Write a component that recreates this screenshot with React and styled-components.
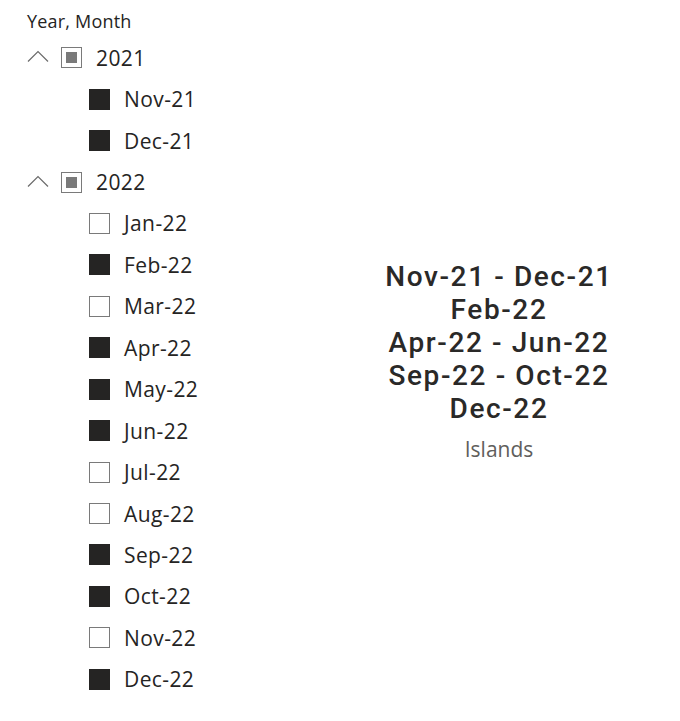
import React from "react";
import styled, { createGlobalStyle } from "styled-components";

const Global = createGlobalStyle`
  html, body { margin: 0; padding: 0; background: #fff; }
  body { font-family: "Open Sans", "Noto Sans", sans-serif; color: #252423; }
`;

const Page = styled.div`
  width: 680px;
  height: 721px;
  display: grid;
  grid-template-columns: 318px 1fr;
  overflow: hidden;
`;

const Slicer = styled.div`
  display: flex;
  flex-direction: column;
  padding: 9px 0 0 27px;
`;

const Header = styled.div`
  font-size: 18px;
  line-height: 24px;
  letter-spacing: 0.2px;
  color: #252423;
  margin-bottom: 4px;
`;

const Row = styled.div`
  height: 41.45px;
  display: flex;
  align-items: center;
  padding-left: ${(p) => (p.$child ? "62px" : "0")};
  font-size: 21px;
  letter-spacing: 0.4px;
  color: #252423;
`;

const Chevron = styled.svg`
  width: 22px;
  height: 12px;
  margin-right: 12px;
  margin-top: -3px;
  flex: none;
`;

const Box = styled.span`
  width: 21px;
  height: 21px;
  box-sizing: border-box;
  flex: none;
  margin-right: 14px;
  display: flex;
  align-items: center;
  justify-content: center;
  border: 1px solid ${(p) => (p.$state === "on" ? "#252423" : "#7a7a7a")};
  background: ${(p) => (p.$state === "on" ? "#252423" : "#fff")};
`;

const Partial = styled.span`
  width: 11px;
  height: 11px;
  background: #7a7a7a;
`;

const Card = styled.div`
  display: flex;
  flex-direction: column;
  align-items: center;
  justify-content: center;
`;

const Value = styled.div`
  font-family: Roboto, "Noto Sans", sans-serif;
  font-weight: 500;
  font-size: 28px;
  line-height: 33px;
  letter-spacing: 1.6px;
  color: #2a2928;
  text-align: center;
`;

const Label = styled.div`
  margin-top: 11px;
  font-size: 21px;
  line-height: 26px;
  color: #605e5c;
`;

const tree = [
  { year: "2021", months: [["Nov-21", true], ["Dec-21", true]] },
  {
    year: "2022",
    months: [
      ["Jan-22", false],
      ["Feb-22", true],
      ["Mar-22", false],
      ["Apr-22", true],
      ["May-22", true],
      ["Jun-22", true],
      ["Jul-22", false],
      ["Aug-22", false],
      ["Sep-22", true],
      ["Oct-22", true],
      ["Nov-22", false],
      ["Dec-22", true],
    ],
  },
];

const lines = [
  "Nov-21 - Dec-21",
  "Feb-22",
  "Apr-22 - Jun-22",
  "Sep-22 - Oct-22",
  "Dec-22",
];

export default function App() {
  return (
    <>
      <Global />
      <Page>
        <Slicer>
          <Header>Year, Month</Header>
          {tree.map((g) => (
            <React.Fragment key={g.year}>
              <Row>
                <Chevron viewBox="0 0 22 12">
                  <path d="M1 11.5 L11 1.5 L21 11.5" fill="none" stroke="#6b6b6b" strokeWidth="1.2" />
                </Chevron>
                <Box $state="partial">
                  <Partial />
                </Box>
                {g.year}
              </Row>
              {g.months.map(([m, on]) => (
                <Row $child key={m}>
                  <Box $state={on ? "on" : "off"} />
                  {m}
                </Row>
              ))}
            </React.Fragment>
          ))}
        </Slicer>
        <Card>
          <Value>
            {lines.map((l) => (
              <div key={l}>{l}</div>
            ))}
          </Value>
          <Label>Islands</Label>
        </Card>
      </Page>
    </>
  );
}
